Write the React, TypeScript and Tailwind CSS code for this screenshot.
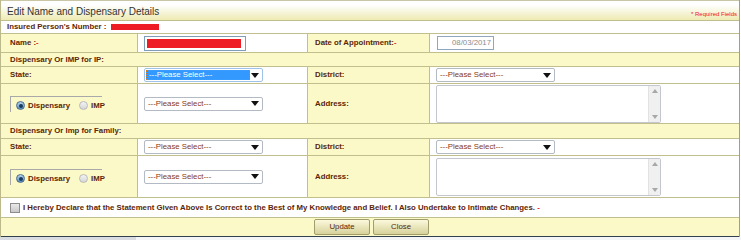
import React from "react";

const LINE = "border-[#c2bf8e]";
const LABEL = "text-[7.8px] font-bold text-[#5a2608]";

function Req() {
  return <span className="text-[#e8141c]">-</span>;
}

function FakeSelect({ focused = false }: { focused?: boolean }) {
  if (focused) {
    return (
      <div className="flex h-[14px] w-[119px] items-center rounded-[2px] border border-[#9fc2e8] bg-white pl-[1px] pr-[3px]">
        <div className="flex h-[10px] w-[104px] items-center border border-dotted border-[#e07a10] bg-[#3399ff] pl-[2px] text-[7.8px] leading-none text-white">
          ---Please Select---
        </div>
        <svg className="ml-auto" width="8" height="5" viewBox="0 0 8 5">
          <path d="M0 0h8L4 5z" fill="#111" />
        </svg>
      </div>
    );
  }
  return (
    <div className="flex h-[14px] w-[119px] items-center rounded-[2px] border border-[#b4bac3] bg-white pl-[3px] pr-[3px]">
      <span className="text-[7.8px] leading-none text-[#8b3a0e]">---Please Select---</span>
      <svg className="ml-auto" width="8" height="5" viewBox="0 0 8 5">
        <path d="M0 0h8L4 5z" fill="#111" />
      </svg>
    </div>
  );
}

function FakeTextarea({ h }: { h: string }) {
  return (
    <div className={`flex w-[225px] rounded-[2px] border border-[#c3c7cd] bg-white ${h}`}>
      <div className="flex-1" />
      <div className="flex w-[12px] flex-col items-center justify-between border-l border-[#e2e2e2] bg-[#f0f0f0] py-[3px]">
        <svg width="6" height="4" viewBox="0 0 6 4">
          <path d="M0 4h6L3 0z" fill="#a8a8a8" />
        </svg>
        <svg width="6" height="4" viewBox="0 0 6 4">
          <path d="M0 0h6L3 4z" fill="#a8a8a8" />
        </svg>
      </div>
    </div>
  );
}

function Radio({ checked }: { checked?: boolean }) {
  return (
    <span
      className={`flex h-[9px] w-[9px] items-center justify-center rounded-full border ${
        checked ? "border-[#4a6a8c] bg-gradient-to-b from-[#b9d3ec] to-[#5b8fc4]" : "border-[#b9b9b9] bg-gradient-to-b from-[#f4f4f4] to-[#d6d6d6]"
      }`}
    >
      {checked && <span className="h-[4px] w-[4px] rounded-full bg-[#173a5e]" />}
    </span>
  );
}

function RadioGroup() {
  return (
    <div className="flex h-[16px] w-[92px] items-end border-l border-t border-[#a9a9a9] pl-[5px]">
      <div className="flex items-center gap-[3px] pt-[4px]">
        <Radio checked />
        <span className={LABEL}>Dispensary</span>
        <span className="w-[3px]" />
        <Radio />
        <span className={LABEL}>IMP</span>
      </div>
    </div>
  );
}

function Row4({
  h,
  c1,
  c2,
  c3,
  c4,
}: {
  h: string;
  c1: React.ReactNode;
  c2: React.ReactNode;
  c3: React.ReactNode;
  c4: React.ReactNode;
}) {
  return (
    <div className={`flex border-b ${LINE} ${h}`}>
      <div className={`flex w-[137px] items-center border-r ${LINE} bg-[#fbf9c8] pl-[9px]`}>{c1}</div>
      <div className={`flex w-[170px] items-center border-r ${LINE} bg-white pl-[6px]`}>{c2}</div>
      <div className={`flex w-[122px] items-center border-r ${LINE} bg-[#fbf9c8] pl-[7px]`}>{c3}</div>
      <div className="flex flex-1 items-center bg-white pl-[6px]">{c4}</div>
    </div>
  );
}

function Section({ title, h }: { title: string; h: string }) {
  return (
    <div className={`flex items-center border-b ${LINE} bg-[#fbf9c8] pl-[9px] ${h}`}>
      <span className={LABEL}>{title}</span>
    </div>
  );
}

export default function App() {
  return (
    <div className="w-[741px] bg-white font-['Liberation_Sans',Arial,sans-serif]">
      <div className="w-[740px] border-l border-r border-l-[#bcb98c] border-r-[#8e9fb6]">
        {/* Titulo */}
        <div className={`flex h-[21px] border-b border-t ${LINE} border-t-[#c8c6a4] bg-gradient-to-b from-white from-20% to-[#eeeab2] pl-[6px] pr-[2px]`}>
          <span className="pt-[5px] text-[10px] leading-[12px] text-[#333]">Edit Name and Dispensary Details</span>
          <span className="ml-auto mt-[10px] text-[6px] leading-[7px] text-[#f0141c]">* Required Fields</span>
        </div>

        {/* Numero asegurado */}
        <div className={`flex h-[13px] items-center border-b ${LINE} bg-white pl-[6px]`}>
          <span className={LABEL}>Insured Person's Number :</span>
          <span className="ml-[5px] h-[6px] w-[48px] bg-[#ee1c25]" />
        </div>

        <Row4
          h="h-[19px]"
          c1={
            <span className={LABEL}>
              Name :<Req />
            </span>
          }
          c2={
            <div className="flex h-[15px] w-[102px] items-center border border-[#7f9db9] pl-[2px]">
              <span className="h-[9px] w-[94px] bg-[#ee1c25]" />
            </div>
          }
          c3={
            <span className={LABEL}>
              Date of Appointment:<Req />
            </span>
          }
          c4={
            <div className="ml-[1px] flex h-[14px] w-[57px] items-center justify-end border border-[#8fa6bd] pr-[2px] text-[7.8px] text-[#8c8c8c]">
              08/03/2017
            </div>
          }
        />

        <Section title="Dispensary Or IMP for IP:" h="h-[14px]" />

        <Row4
          h="h-[17px]"
          c1={<span className={LABEL}>State:</span>}
          c2={<FakeSelect focused />}
          c3={<span className={LABEL}>District:</span>}
          c4={<FakeSelect />}
        />
        <Row4
          h="h-[40px]"
          c1={<RadioGroup />}
          c2={<FakeSelect />}
          c3={<span className={LABEL}>Address:</span>}
          c4={<FakeTextarea h="h-[38px]" />}
        />

        <Section title="Dispensary Or Imp for Family:" h="h-[15px]" />

        <Row4
          h="h-[17px]"
          c1={<span className={LABEL}>State:</span>}
          c2={<FakeSelect />}
          c3={<span className={LABEL}>District:</span>}
          c4={<FakeSelect />}
        />
        <Row4
          h="h-[42px]"
          c1={<RadioGroup />}
          c2={<FakeSelect />}
          c3={<span className={LABEL}>Address:</span>}
          c4={<FakeTextarea h="h-[38px]" />}
        />

        {/* Declaracion */}
        <div className={`flex h-[20px] items-center gap-[3px] border-b ${LINE} bg-white pl-[9px]`}>
          <span className="h-[10px] w-[10px] border border-[#8d8d8d] bg-gradient-to-b from-[#e9e9e9] to-[#c9c9c9]" />
          <span className={LABEL}>
            I Hereby Declare that the Statement Given Above Is Correct to the Best of My Knowledge and Belief. I Also
            Undertake to Intimate Changes. <Req />
          </span>
        </div>

        {/* Botones */}
        <div className="flex h-[19px] items-center justify-center gap-[3px] border-b border-[#33414f] bg-[#fbf9c8] pl-[3px]">
          <button
            type="button"
            className="h-[16px] w-[56px] rounded-[2px] border border-[#a29e6c] bg-gradient-to-b from-[#fbf9dc] to-[#d8d29a] text-[7.8px] text-[#5a2608]"
          >
            Update
          </button>
          <button
            type="button"
            className="h-[16px] w-[56px] rounded-[2px] border border-[#a29e6c] bg-gradient-to-b from-[#fbf9dc] to-[#d8d29a] text-[7.8px] text-[#5a2608]"
          >
            Close
          </button>
        </div>
      </div>
      <div className="flex h-[3px]">
        <div className="w-[136px] bg-[#d9dde2]" />
        <div className="flex-1 bg-[#f4f5f7]" />
      </div>
    </div>
  );
}
